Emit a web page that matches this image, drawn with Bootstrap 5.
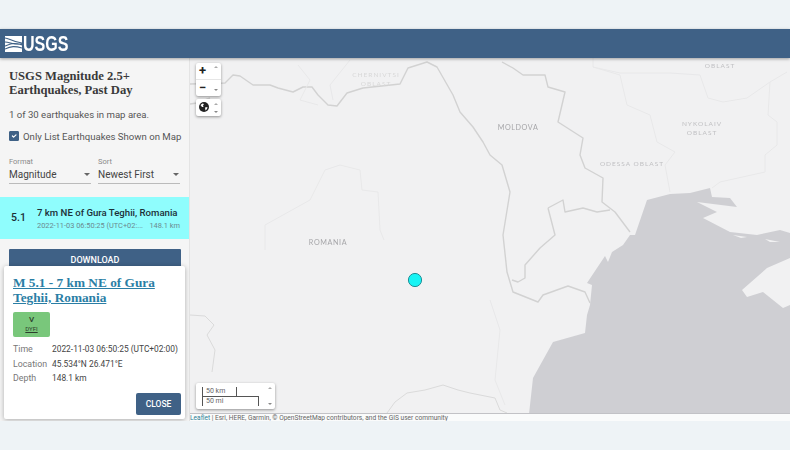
<!doctype html>
<html lang="en"><head><meta charset="utf-8"><title>USGS</title>
<link href="https://cdn.jsdelivr.net/npm/bootstrap@5.3.0/dist/css/bootstrap.min.css" rel="stylesheet">
<style>
html,body{height:450px;overflow:hidden}
body{background:#eef3f6;font-family:Roboto,"Liberation Sans",sans-serif;color:#4a4a4a;padding-top:29px}
.topbar{height:29px;background:#3f6186;box-shadow:0 1px 3px rgba(0,0,0,.35);position:relative;z-index:3;padding-left:5px}
.wordmark{font-family:"Liberation Sans",sans-serif;font-weight:700;font-size:22px;color:#fff;line-height:29px;display:inline-block;transform:scaleX(.73);transform-origin:left center;margin-left:1px}
.stage{height:363px;position:relative;overflow:hidden}
.side{width:190px;flex:none;background:#f5f5f5;border-right:1px solid #e4e4e4;padding-top:11px;height:100%}
.side-title{font-family:"Liberation Serif",serif;font-weight:700;font-size:12.6px;line-height:14px;color:#3a3a3a;margin:0 0 12px 9px}
.count{font-size:9.6px;line-height:12px;margin:0 0 8px 9px;color:#555}
.only{margin:0 0 12px 9px;font-size:9.6px;line-height:16px;color:#555;min-height:0;padding:0}
.only .form-check-input{float:none;margin:0 4px 0 0;width:10px;height:10px;border-radius:1px;background-color:#3f6186;border-color:#3f6186;vertical-align:-1px}
.pick-row{margin:0 9px 13px;gap:7px}
.pick{flex:1;border-bottom:1px solid #bbb;height:27px}
.pick-l{font-size:7.5px;line-height:9px;color:#8a8a8a}
.pick-v{font-size:10px;line-height:17px;color:#444;display:flex;justify-content:space-between;align-items:center}
.caret{width:0;height:0;border:3px solid transparent;border-top:3px solid #666;border-bottom:0;margin-right:1px}
.quake{height:42px;background:#8ffdfd;padding:0 9px 0 11px;color:#123}
.mag{font-size:10.5px;font-weight:500;width:26px;color:#1c3038}
.quake-t{font-size:9.6px;font-weight:500;line-height:13px;color:#1c3038;white-space:nowrap}
.quake-s{font-size:7.4px;line-height:11px;color:#6b8a90;white-space:nowrap;display:flex;justify-content:space-between;margin-top:1px}
.dl{margin:10px 9px 0;width:172px;height:26px;background:#3f6186;color:#fff;font-size:9px;font-weight:500;padding:0 0 2px;text-align:center;border:0;border-radius:1px;display:block}
.mapbox{flex:1;position:relative;background:#f1f1f2}
.mapbox>svg{display:block;width:600px;height:356px}
.soft{filter:blur(.35px)}
.attrib{position:absolute;left:0;right:0;top:355px;height:8px;background:#fafbfb;font-size:6.6px;line-height:9px;color:#666;white-space:nowrap;overflow:hidden;border-top:1px solid #c2c2c6}
.attrib span{color:#2a8197}
.ctl{position:absolute;background:#fff;border-radius:2px;box-shadow:0 1px 3px rgba(0,0,0,.4);z-index:2}
.zoombox{left:6px;top:5px;width:25px;height:33px}
.zb{height:16px;font-size:13px;line-height:15px;font-weight:700;color:#222;padding-left:3px;width:100%;position:relative}
.zb+.zb{border-top:1px solid #e6e6e6}
.globe{left:6px;top:41px;width:25px;height:17px;padding:3px 0 0 3px}
.arr{position:absolute;right:3px;width:0;height:0;border:2px solid transparent}
.arr.up{border-bottom:2px solid #aaa;border-top:0}
.arr.dn{border-top:2px solid #888;border-bottom:0}
.scalebox{left:6px;top:325px;width:79px;height:26px;font-size:7px;color:#666}
.sb{position:absolute;left:6px;line-height:9px;padding-left:3px;border-left:1px solid #555}
.sb1{top:4px;height:9px;width:35px;border-right:1px solid #555}
.sb2{top:13px;height:10px;width:57px;border-right:1px solid #555;border-top:1px solid #555}
.pop{position:absolute;left:4px;top:208px;width:181px;height:153px;background:#fff;border-radius:2px;box-shadow:0 1px 5px rgba(0,0,0,.3);padding:9px 5px 0 9px;z-index:4}
.pop-t{font-family:"Liberation Serif",serif;font-weight:700;font-size:13.3px;line-height:15px;color:#2a7ea5;text-decoration:underline;display:block}
.dyfi{width:37px;height:25px;background:#79c77b;border-radius:2px;margin:7px 0 5px;text-align:center;color:#2c3e2c;font-size:8px;font-weight:500;line-height:10px;padding-top:3px}
.dyfi small{display:block;font-size:6px;font-weight:400;line-height:7px;text-decoration:underline}
.dl-row{font-size:8.4px;line-height:14.5px;color:#444;white-space:nowrap}
.dl-row b{font-weight:400;color:#777;width:39px;display:inline-block;font-size:8.8px}
.closer{position:absolute;right:4px;bottom:4px;width:45px;height:22px;background:#3f6186;color:#fff;font-size:8.5px;font-weight:500;border:0;border-radius:2px;padding:0}
</style></head><body>
<header class="topbar d-flex align-items-center">
<svg width="17" height="16" viewBox="0 0 17 16"><rect width="17" height="16" fill="#fff"/><path d="M0 2c4 0 7 4 17 5M0 6c5 0 8 3 17 2M0 10c5-2 9-4 17-1M0 13c6-3 10-3 17-1" fill="none" stroke="#3f6186" stroke-width="1.1"/></svg>
<span class="wordmark">USGS</span>
</header>
<main class="stage d-flex">
<aside class="side">
<h1 class="side-title">USGS Magnitude 2.5+ Earthquakes, Past Day</h1>
<p class="count">1 of 30 earthquakes in map area.</p>
<div class="form-check only"><input class="form-check-input" type="checkbox" checked id="o"><label for="o">Only List Earthquakes Shown on Map</label></div>
<div class="pick-row d-flex">
<div class="pick"><div class="pick-l">Format</div><div class="pick-v">Magnitude<i class="caret"></i></div></div>
<div class="pick"><div class="pick-l">Sort</div><div class="pick-v">Newest First<i class="caret"></i></div></div>
</div>
<div class="quake d-flex align-items-center"><div class="mag">5.1</div><div class="flex-grow-1"><div class="quake-t">7 km NE of Gura Teghii, Romania</div><div class="quake-s"><span>2022-11-03 06:50:25 (UTC+02:...</span><span>148.1 km</span></div></div></div>
<button class="dl">DOWNLOAD</button>
</aside>
<section class="mapbox">
<svg viewBox="190 58 600 356" xmlns="http://www.w3.org/2000/svg">
<rect x="190" y="58" width="600" height="356" fill="#f1f1f2"/>
<path class="soft" d="M529 414L533 378 553 342 585 333 587 315 590 305 592 285 587 283 597 268 605 256 608 262 612 252 623 245 630 235 635 235 647 200 670 194 690 193 710 188 712 197 730 198 737 207 697 202 717 212 703 218 730 232 757 235 780 230 790 233V258L767 268 742 290 747 297 763 292 783 308 790 305V414Z" fill="#cfcfd3"/>
<path d="M733 235l14 2-6 1zM765 239l15 3-10 0z" fill="#f1f1f2"/>
<g class="soft" fill="none" stroke="#d2d2d2" stroke-width="1.4" stroke-linejoin="round">
<path d="M190 84L225 83 233 75 240 76 253 85 270 85 278 88 293 92 303 87 312 87 318 95 328 105 337 106 347 93 363 88 400 84 408 68 427 62 437 67 453 95 460 112 473 127 483 142 490 155 502 165 510 192 503 235 507 272 513 292 538 302 543 295 568 286 585 292 590 303"/>
<path d="M502 62L513 68 523 75 545 75 548 87 565 92 558 122 583 138 580 155 585 168 603 178 602 202 615 212 630 232"/>
<path d="M548 208L563 200 565 212 583 208 597 212 610 210M548 208L555 235 540 248 525 265 525 278 518 282 512 280"/>
<path d="M190 104L197 103 210 98" /> 
</g>
<g class="soft" fill="none" stroke="#e8e8e9" stroke-width="1">
<path d="M593 58V67L620 75 627 105 650 115 657 142 675 152 665 165 670 192M593 67L620 73 670 73 700 75 708 98 723 102 747 98 770 82 787 72M770 82L768 115 777 122 777 145 765 155 765 172 720 182 712 188"/>
<path d="M298 65L310 80 300 100 318 105M350 60L330 85 333 100"/>
<path d="M265 225L310 200 325 170 340 165 360 170 362 190 378 192 380 230 384 240M265 225L265 250"/>
<path d="M490 300L500 330 495 380 505 405"/>
</g>
<g class="soft" fill="none" stroke="#dadada" stroke-width="1">
<path d="M387 413L395 402 407 393 425 390 443 385 458 390 470 393 480 395 490 397 495 398 500 410 507 413"/>
<path d="M190 315L205 316 214 325 207 335 215 350 212 372"/>
</g>
<g class="soft" fill="#c0c0c3" font-family="Lato,'Liberation Sans',sans-serif" text-anchor="middle" font-size="6.5" letter-spacing="1">
<text x="376" y="77" fill="#d8d8d8">CHERNIVTSI</text><text x="376" y="86" fill="#d8d8d8">OBLAST</text>
<text x="518" y="130" fill="#a6a6a9" letter-spacing=".6" font-size="7.2">MOLDOVA</text>
<text x="328" y="245" fill="#a6a6a9" letter-spacing=".6" font-size="7.2">ROMANIA</text>
<text x="702" y="126">NYKOLAIV</text><text x="702" y="135">OBLAST</text>
<text x="632" y="166">ODESSA OBLAST</text><text x="720" y="68">OBLAST</text>
</g>
<circle cx="415" cy="280" r="6.6" fill="#18f4f4" stroke="#1f8f96" stroke-width="1"/>
</svg>
<div class="ctl zoombox"><div class="zb">+<i class="arr up" style="top:3px"></i></div><div class="zb">−<i class="arr dn" style="bottom:4px"></i></div></div>
<div class="ctl globe"><svg width="10" height="10" viewBox="0 0 10 10" class="d-block"><circle cx="5" cy="5" r="5" fill="#222"/><path d="M1.5 3l2-1.5 1.5.5-1 1.5.5 1.5-1.5 0zM6 5.5l2.5-.5-.5 2-1.5 1.5z" fill="#fff"/></svg><i class="arr up" style="top:4px"></i><i class="arr dn" style="bottom:3px"></i></div>
<div class="ctl scalebox"><div class="sb sb1">50 km</div><div class="sb sb2">50 mi</div><i class="arr up" style="top:4px"></i><i class="arr dn" style="bottom:4px"></i></div>
<div class="attrib"><span>Leaflet</span> | Esri, HERE, Garmin, © OpenStreetMap contributors, and the GIS user community</div>
</section>
<div class="pop">
<a class="pop-t" href="#">M 5.1 - 7 km NE of Gura Teghii, Romania</a>
<div class="dyfi">V<small>DYFI</small></div>
<div class="dl-row"><b>Time</b>2022-11-03 06:50:25 (UTC+02:00)</div>
<div class="dl-row"><b>Location</b>45.534°N 26.471°E</div>
<div class="dl-row"><b>Depth</b>148.1 km</div>
<button class="closer">CLOSE</button>
</div>
</main>
<script src="https://cdn.jsdelivr.net/npm/bootstrap@5.3.0/dist/js/bootstrap.bundle.min.js"></script>
</body></html>
